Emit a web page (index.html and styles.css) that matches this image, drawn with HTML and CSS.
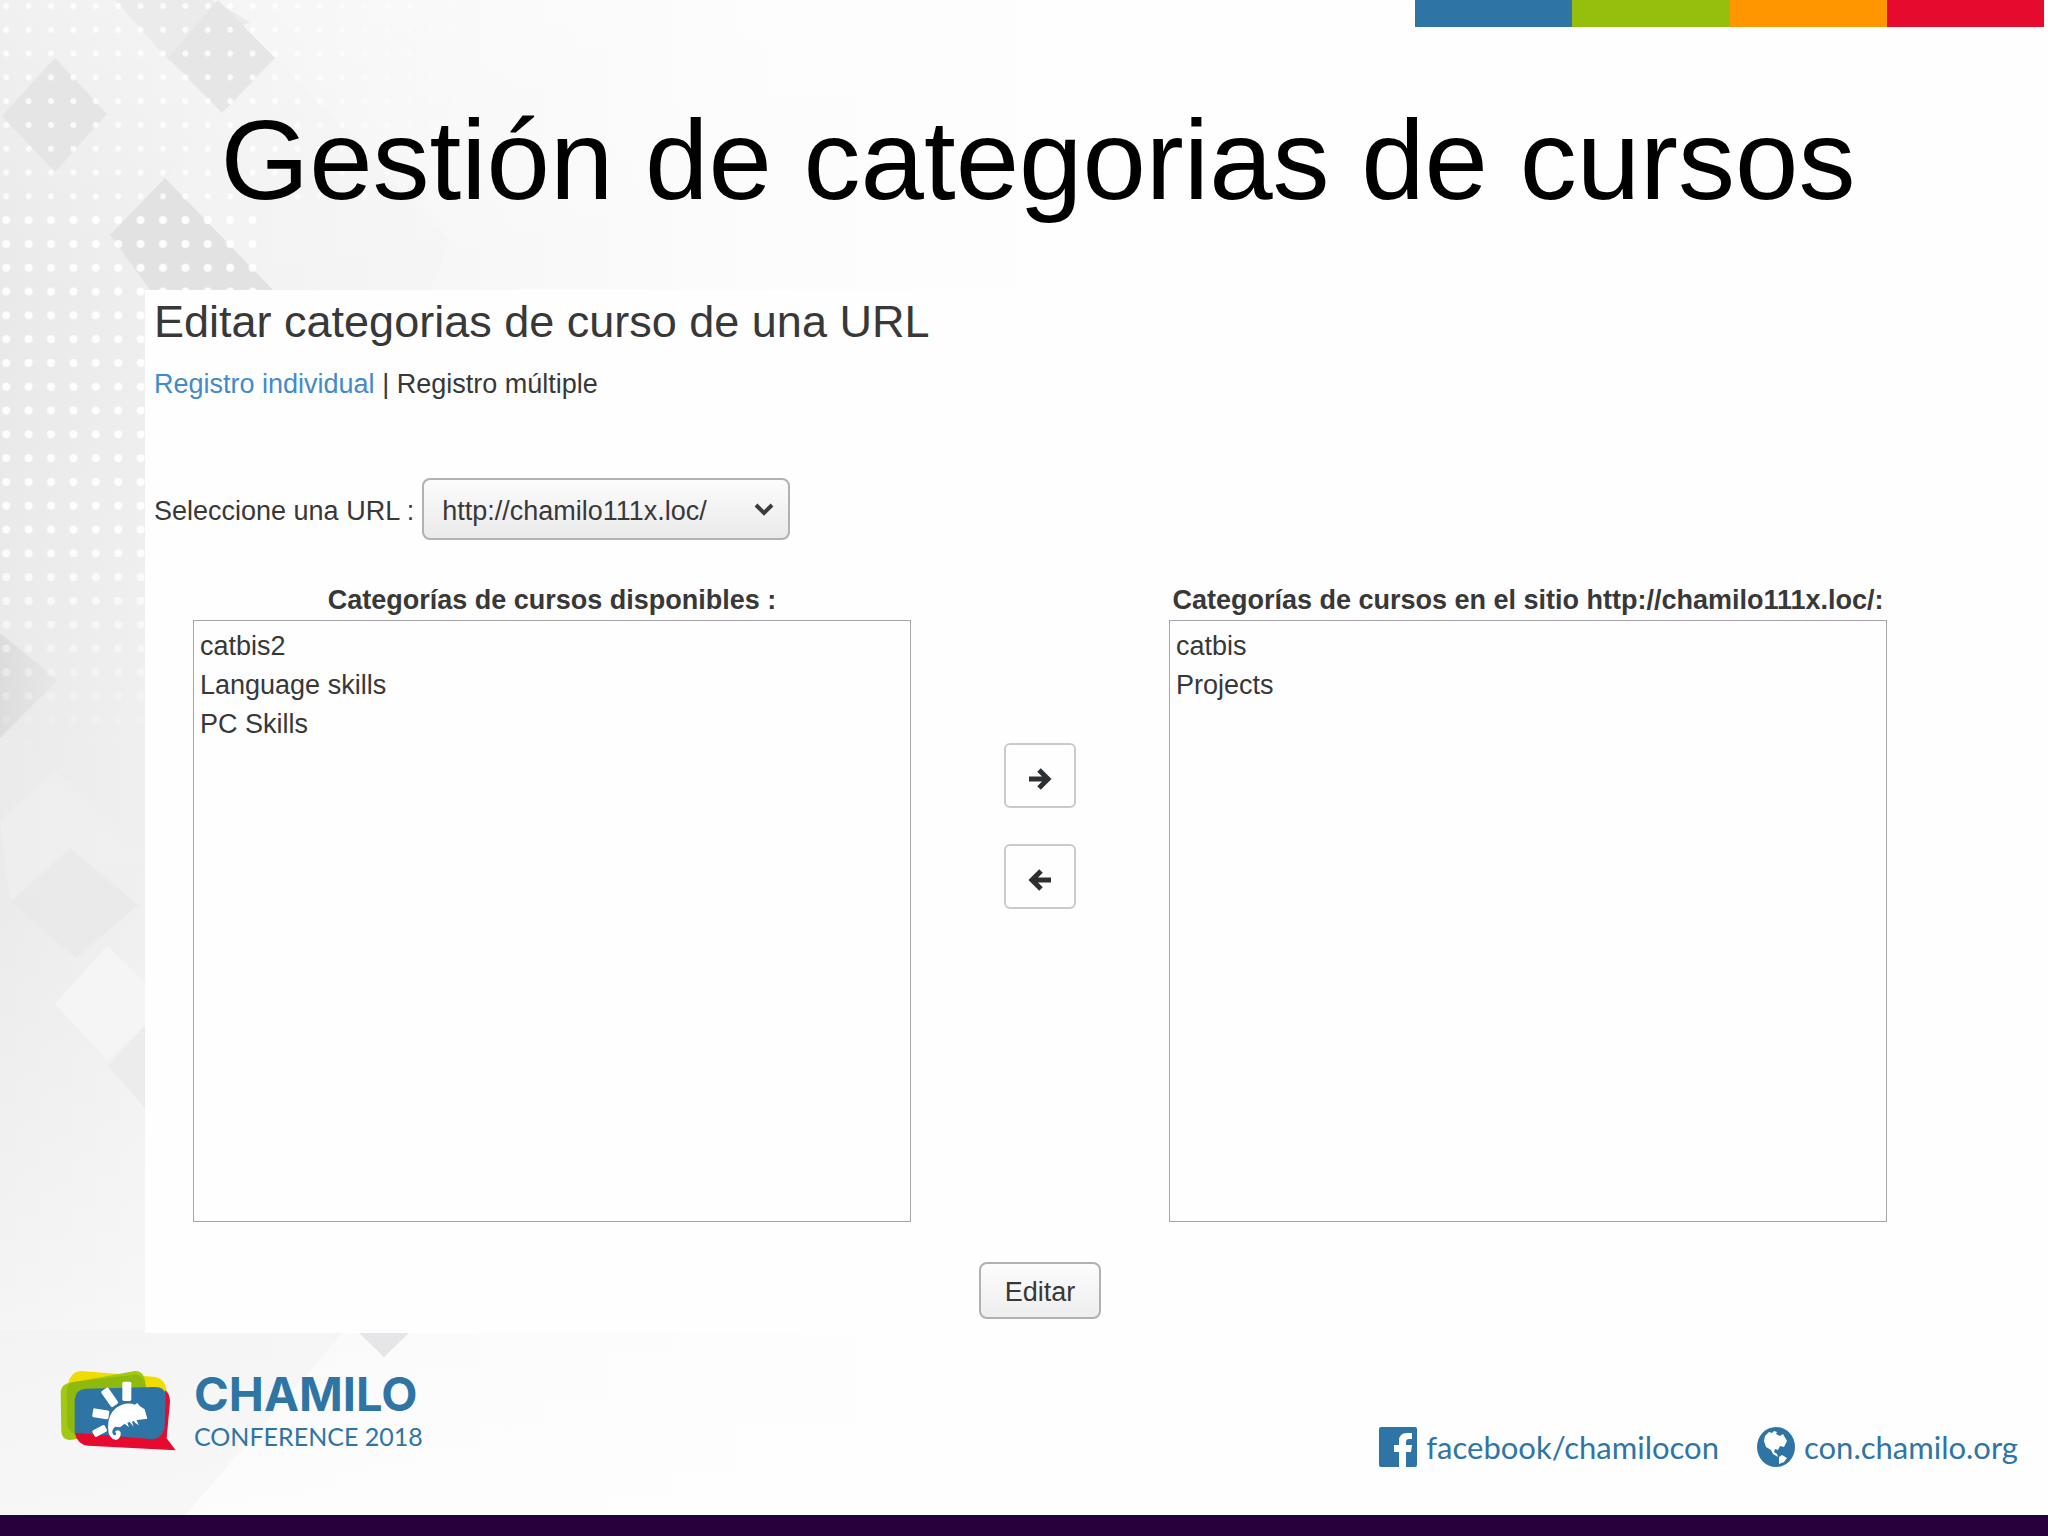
FILE: index.html
```html
<!DOCTYPE html>
<html lang="es">
<head>
  <meta charset="UTF-8">
  <meta name="viewport" content="width=device-width, initial-scale=1.0">
  <title>Gestión de categorias de cursos</title>
  <link rel="stylesheet" href="styles.css">
</head>
<body>
  <!-- Fondo decorativo -->
  <svg class="backdrop" width="1100" height="1515" viewBox="0 0 1100 1515" aria-hidden="true">
    <defs>
      <linearGradient id="shade" x1="0" y1="0" x2="1" y2="0">
        <stop offset="0" stop-color="#e9e9e9"/>
        <stop offset="0.15" stop-color="#efefef"/>
        <stop offset="0.35" stop-color="#f6f6f6"/>
        <stop offset="0.7" stop-color="#fcfcfc"/>
        <stop offset="1" stop-color="#fefefe"/>
      </linearGradient>
      <linearGradient id="lighten" x1="0" y1="0" x2="0" y2="1">
        <stop offset="0" stop-color="#fefefe" stop-opacity="0.35"/>
        <stop offset="0.2" stop-color="#fefefe" stop-opacity="0"/>
        <stop offset="0.6" stop-color="#fefefe" stop-opacity="0.1"/>
        <stop offset="0.85" stop-color="#fefefe" stop-opacity="0.5"/>
        <stop offset="1" stop-color="#fefefe" stop-opacity="0.9"/>
      </linearGradient>
      <pattern id="dots" width="22.4" height="23.8" patternUnits="userSpaceOnUse" x="-5" y="-6">
        <circle cx="11.2" cy="12" r="4" fill="#fff" opacity="0.9"/>
      </pattern>
      <pattern id="dots-small" width="22.4" height="23.8" patternUnits="userSpaceOnUse" x="-5" y="-6">
        <circle cx="11.2" cy="12" r="3" fill="#fff" opacity="0.8"/>
      </pattern>
      <linearGradient id="fade" x1="0" y1="0" x2="1" y2="0">
        <stop offset="0" stop-color="#fff"/>
        <stop offset="0.5" stop-color="#fff"/>
        <stop offset="1" stop-color="#000"/>
      </linearGradient>
      <linearGradient id="fade-down" x1="0" y1="0" x2="0" y2="1">
        <stop offset="0" stop-color="#fff"/>
        <stop offset="0.6" stop-color="#fff"/>
        <stop offset="1" stop-color="#000"/>
      </linearGradient>
      <linearGradient id="corner" x1="0" y1="0" x2="1" y2="0">
        <stop offset="0" stop-color="#dcdcdc"/>
        <stop offset="1" stop-color="#e8e8e8"/>
      </linearGradient>
      <mask id="dot-mask"><rect width="520" height="300" fill="url(#fade)"/></mask>
      <mask id="dot-mask-left"><rect y="200" width="520" height="560" fill="url(#fade-down)"/></mask>
    </defs>
    <rect width="1100" height="1515" fill="url(#shade)"/>
    <rect width="1100" height="1515" fill="url(#lighten)"/>
    <polygon points="115,0 212,0 250,22 170,62" fill="#ebebeb"/>
    <polygon points="218,0 275,58 222,113 168,58" fill="#e6e6e6"/>
    <polygon points="55,58 107,114 55,172 2,116" fill="#e5e5e5"/>
    <polygon points="275,58 450,240 430,290 273,290 165,178" fill="#f4f4f4" opacity="0.5"/>
    <polygon points="165,178 273,290 150,290 110,235" fill="#e2e2e2"/>
    <polygon points="0,633 58,680 0,738" fill="url(#corner)"/>
    <polygon points="55,770 97,812 145,860 10,900 0,820" fill="#f0f0f0" opacity="0.6"/>
    <polygon points="10,902 70,848 138,905 76,958" fill="#e8e8e8" opacity="0.8"/>
    <polygon points="107,946 145,982 145,1026 107,1060 55,1004" fill="#f5f5f5"/>
    <polygon points="108,1066 145,1026 145,1108" fill="#ececec"/>
    <polygon points="0,1330 345,1330 185,1515 0,1515" fill="#f2f2f2" opacity="0.5"/>
    <polygon points="358,1332 410,1332 384,1357" fill="#e6e5e7"/>
    <rect width="520" height="208" fill="url(#dots-small)" mask="url(#dot-mask)"/>
    <rect y="208" width="270" height="540" fill="url(#dots)" mask="url(#dot-mask-left)"/>
  </svg>

  <div class="stripes">
    <span class="stripe blue"></span>
    <span class="stripe green"></span>
    <span class="stripe orange"></span>
    <span class="stripe red"></span>
  </div>

  <h1 class="title">Gestión de categorias de cursos</h1>

  <main class="panel">
    <h2 class="heading">Editar categorias de curso de una URL</h2>
    <p class="modes"><a href="#">Registro individual</a> | Registro múltiple</p>

    <form class="form">
      <div class="url-row">
        <label for="url">Seleccione una URL :</label>
        <div class="select-box">
          <select id="url" class="url-select">
            <option>http://chamilo111x.loc/</option>
          </select>
          <svg class="chevron" width="22" height="14" viewBox="0 0 22 14"><path d="M3 3l8 8 8-8" fill="none" stroke="#3c3c3c" stroke-width="4"/></svg>
        </div>
      </div>

      <div class="lists">
        <div class="list-column">
          <label class="list-label" for="available">Categorías de cursos disponibles :</label>
          <select id="available" class="list" multiple>
            <option>catbis2</option>
            <option>Language skills</option>
            <option>PC Skills</option>
          </select>
        </div>
        <div class="moves">
          <button type="button" class="move" aria-label="Agregar">
            <svg width="24" height="24" viewBox="0 0 24 24"><path d="M1 12h18M11 3l9 9-9 9" fill="none" stroke="#2d3033" stroke-width="5"/></svg>
          </button>
          <button type="button" class="move" aria-label="Quitar">
            <svg width="24" height="24" viewBox="0 0 24 24"><path d="M23 12H5M13 3l-9 9 9 9" fill="none" stroke="#2d3033" stroke-width="5"/></svg>
          </button>
        </div>
        <div class="list-column">
          <label class="list-label" for="assigned">Categorías de cursos en el sitio http://chamilo111x.loc/:</label>
          <select id="assigned" class="list" multiple>
            <option>catbis</option>
            <option>Projects</option>
          </select>
        </div>
      </div>

      <button type="button" class="submit">Editar</button>
    </form>
  </main>

  <footer class="footer">
    <div class="brand">
      <svg width="117" height="81" viewBox="60 90 351 243" aria-hidden="true">
        <path d="M84 150V130Q92 95 122 93L340 110Q375 114 379 150V200H84Z" fill="#f0dc00"/>
        <path d="M62 155Q64 132 90 128L285 93Q312 92 317 130V200L120 296L88 300Q66 298 64 275Z" fill="#a2c814"/>
        <path d="M80 150Q82 130 100 126L285 104Q312 102 317 140V200L110 285Q84 275 82 255Z" fill="#8fb90c"/>
        <path d="M376 150Q390 162 390 185L380 295L407 331L145 317Q112 314 104 278L370 230Z" fill="#e60a2e"/>
        <path d="M104 180Q106 148 138 146L345 141Q376 142 377 165L374 262Q368 294 340 298L104 278Z" fill="#2e75a6"/>
        <g fill="#fff">
          <rect x="247" y="125" width="27" height="58" rx="5"/>
          <rect x="196" y="143" width="26" height="58" rx="5" transform="rotate(-35 209 172)"/>
          <rect x="158" y="208" width="49" height="27" rx="5" transform="rotate(9 182 221)"/>
          <rect x="158" y="262" width="42" height="22" rx="5" transform="rotate(-28 179 273)"/>
          <path d="M204 262Q203 225 228 204Q258 184 284 194L292 189L300 199L314 208L322 236L298 239L290 240L296 256L286 249L281 243L276 245L281 260L269 246L262 248L267 262L254 251L240 262L226 260Q216 266 217 278Q220 288 227 285Q231 280 225 275Q235 266 242 277Q244 296 228 300Q205 298 204 262Z"/>
        </g>
      </svg>
      <div class="brand-text">
        <strong class="brand-name">CHAMILO</strong>
        <span class="brand-event">CONFERENCE 2018</span>
      </div>
    </div>
    <nav class="links">
      <a class="link" href="#">
        <svg width="38" height="40" viewBox="0 0 38 40"><rect width="38" height="40" rx="2" fill="#2e75a6"/><path d="M20 40V25H15V18H20V14Q20 6 28 6H33V12H30Q27 12 27 15V18H33L32 25H27V40Z" fill="#fff"/></svg>
        facebook/chamilocon
      </a>
      <a class="link" href="#">
        <svg width="38" height="40" viewBox="0 0 38 40"><ellipse cx="19" cy="20" rx="19" ry="20" fill="#2e75a6"/><path d="M8 9L12 5L15 6L17 4L20 5L19 7L23 9L26 7L30 14L27 20L23 19L21 23L18 22L17 25L20 27L21 30L16 27L14 23L9 20L7 14Z M22 30L25 28L30 31L27 35L22 37Z" fill="#fff"/></svg>
        con.chamilo.org
      </a>
    </nav>
  </footer>
</body>
</html>
```
FILE: styles.css
```css
* {
  margin: 0;
  padding: 0;
  box-sizing: border-box;
}

body {
  position: relative;
  display: flex;
  flex-direction: column;
  min-height: 100vh;
  font-family: "Liberation Sans", Arial, sans-serif;
  font-size: 27px;
  line-height: 40px;
  color: #383838;
  background-color: #fefefe;
  border-bottom: 21px solid #28003c;
}

.backdrop {
  position: absolute;
  top: 0;
  left: 0;
  z-index: -1;
}

/* Franjas de color */
.stripes {
  display: flex;
  width: 629px;
  max-width: 100%;
  height: 27px;
  margin-left: auto;
  margin-right: 4px;
}

.stripe {
  flex: 1;
}

.blue {
  background-color: #2e75a6;
}

.green {
  background-color: #96be0d;
}

.orange {
  background-color: #ff9600;
}

.red {
  background-color: #e60a2e;
}

.title {
  margin: 69px 0 66px 28px;
  font-size: 114px;
  font-weight: normal;
  line-height: 128px;
  text-align: center;
  color: #000;
}

/* Panel principal */
.panel {
  margin: 0 113px 0 145px;
  padding: 7px 0 14px;
  background-color: #fefefe;
}

.heading {
  margin: 0 9px 17px;
  font-size: 45px;
  font-weight: normal;
  line-height: 50px;
}

.modes {
  margin: 0 9px 74px;
}

.modes a {
  color: #428bca;
  text-decoration: none;
}

.url-row {
  display: flex;
  align-items: baseline;
  gap: 8px;
  margin: 0 9px 40px;
}

.select-box {
  position: relative;
}

.url-select,
.list,
.submit {
  font: inherit;
  color: inherit;
}

.url-select {
  display: block;
  appearance: none;
  width: 368px;
  height: 62px;
  padding: 4px 50px 0 18px;
  border: 2px solid #b2b0b3;
  border-radius: 8px;
  background: linear-gradient(#fdfcfd, #ebeaeb);
}

.chevron {
  position: absolute;
  top: 24px;
  right: 15px;
  pointer-events: none;
}

/* Listas */
.lists {
  display: grid;
  grid-template-columns: 1fr 258px 1fr;
  padding: 0 48px;
}

.list-column {
  display: flex;
  flex-direction: column;
  min-width: 0;
}

.list-label {
  display: flex;
  justify-content: center;
  font-weight: bold;
  white-space: nowrap;
}

.list {
  height: 602px;
  padding: 10px 0;
  border: 1px solid #a6a4a8;
  border-radius: 0;
  background-color: #fefefe;
}

.list option {
  min-height: 39px;
  padding: 0 6px;
  line-height: 39px;
}

.moves {
  display: flex;
  flex-direction: column;
  align-items: center;
  gap: 36px;
  padding-top: 163px;
}

.move {
  display: flex;
  align-items: center;
  justify-content: center;
  width: 72px;
  height: 65px;
  padding-top: 6px;
  border: 2px solid #cbc9ce;
  border-radius: 6px;
  background-color: #fefefe;
}

.submit {
  display: block;
  width: 122px;
  height: 57px;
  margin: 40px auto 0;
  padding-top: 2px;
  border: 2px solid #b2b0b3;
  border-radius: 8px;
  background: linear-gradient(#fdfcfd, #efeeef);
}

/* Pie */
.footer {
  display: flex;
  justify-content: space-between;
  align-items: flex-start;
  margin-top: auto;
  padding: 37px 30px 48px 60px;
  color: #2e75a6;
}

.brand {
  display: flex;
  align-items: flex-start;
  gap: 17px;
}

.brand-text {
  display: flex;
  flex-direction: column;
}

.brand-name {
  font-family: Inter, sans-serif;
  font-size: 47px;
  line-height: 48px;
}

.brand-event {
  font-family: Lato, sans-serif;
  font-size: 25px;
  line-height: 36px;
}

.links {
  display: flex;
  gap: 38px;
  padding-top: 57px;
}

.link {
  display: flex;
  align-items: center;
  gap: 9px;
  font-family: Lato, sans-serif;
  font-size: 31px;
  color: inherit;
  text-decoration: none;
}
```
